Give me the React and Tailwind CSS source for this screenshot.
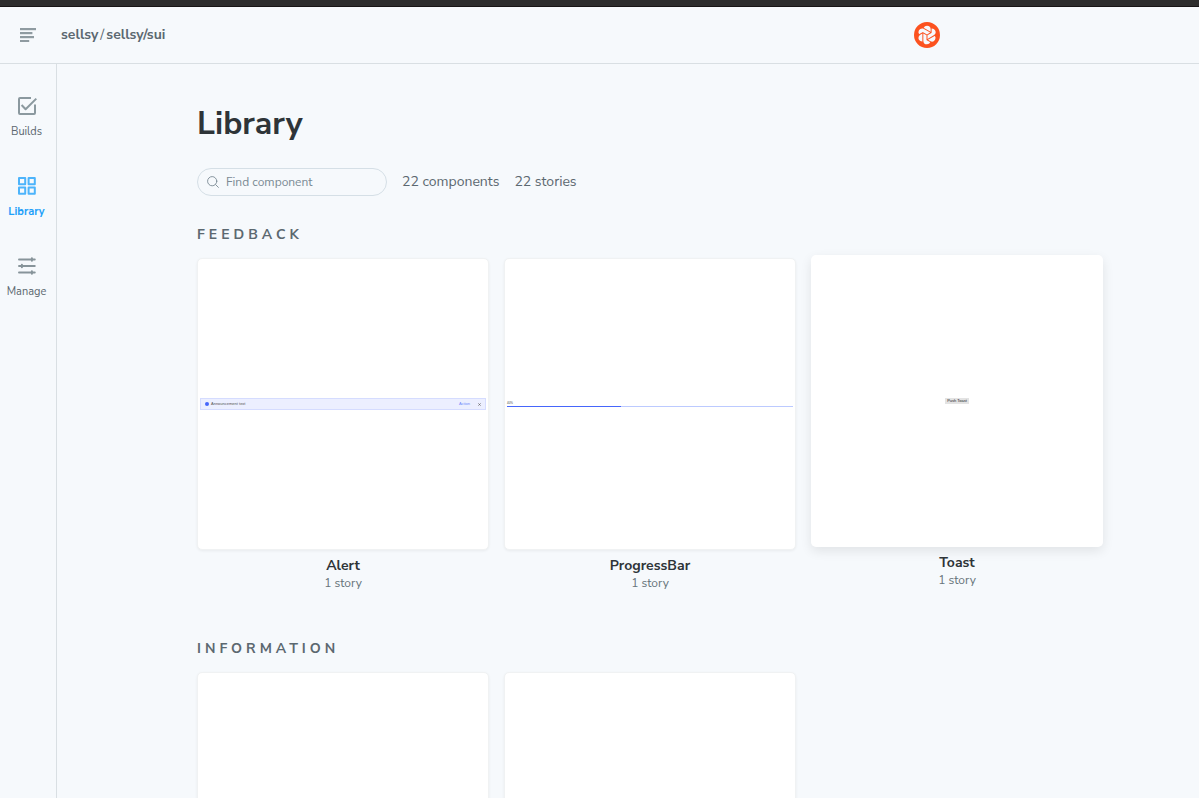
import React from "react";
import { SiChromatic } from "react-icons/si";

function MenuIcon() {
  return (
    <svg width="18" height="16" viewBox="0 0 18 16" fill="#8f9ba1" aria-hidden="true">
      <rect x="1" y="1" width="16" height="2.2" />
      <rect x="1" y="5" width="12.4" height="2.2" />
      <rect x="1" y="9" width="14" height="2.2" />
      <rect x="1" y="13" width="9.2" height="2" />
    </svg>
  );
}

function BuildsIcon() {
  return (
    <svg width="20" height="20" viewBox="0 0 20 20" fill="none" stroke="#8b999f" strokeWidth="2" strokeLinecap="butt" strokeLinejoin="round" aria-hidden="true">
      <path d="M14 2H3a1 1 0 0 0-1 1v14a1 1 0 0 0 1 1h14a1 1 0 0 0 1-1V8.5" />
      <path d="M4.6 9l4 4.2L19.3 2.6" />
    </svg>
  );
}

function LibraryIcon() {
  return (
    <svg width="20" height="20" viewBox="0 0 20 20" fill="none" stroke="#4db4fb" strokeWidth="2" strokeLinejoin="round" aria-hidden="true">
      <rect x="2" y="2" width="6.2" height="6.2" />
      <rect x="11.6" y="2" width="6.2" height="6.2" />
      <rect x="2" y="11.6" width="6.2" height="6.2" />
      <rect x="11.6" y="11.6" width="6.2" height="6.2" />
    </svg>
  );
}

function ManageIcon() {
  return (
    <svg width="20" height="20" viewBox="0 0 20 20" fill="none" stroke="#87949a" strokeWidth="1.9" strokeLinecap="round" aria-hidden="true">
      <path d="M2 3.5h15.8M2 10h15.8M2 16.5h15.8" />
      <path d="M14.9 2.2v2.6M4.9 8.7v2.6M14.9 15.2v2.6" strokeWidth="2" />
    </svg>
  );
}

function SearchIcon() {
  return (
    <svg width="12" height="12" viewBox="0 0 12 12" fill="none" stroke="#7a8a94" strokeWidth="0.9" strokeLinecap="round" aria-hidden="true">
      <circle cx="5.2" cy="5.2" r="4.6" />
      <path d="M8.6 8.6l2.8 2.8" />
    </svg>
  );
}

const navItems = [
  { label: "Builds", Icon: BuildsIcon },
  { label: "Library", Icon: LibraryIcon, active: true },
  { label: "Manage", Icon: ManageIcon },
];

function AlertPreview() {
  return (
    <div className="mx-0.5 flex h-3 w-full items-center border border-[#d5dcff] bg-[#ecefff] px-1 font-['Liberation_Sans',sans-serif] text-[4px] leading-none text-[#555]">
      <span className="mr-0.5 size-1 rounded-full bg-[#4666fb]" />
      <span>Announcement text</span>
      <span className="ml-auto text-[#7088fb]">Action</span>
      <svg className="ml-2 size-[3px]" viewBox="0 0 4 4" stroke="#666" strokeWidth="1" aria-hidden="true">
        <path d="M0.5 0.5l3 3M3.5 0.5l-3 3" />
      </svg>
    </div>
  );
}

function ProgressPreview() {
  return (
    <div className="mx-0.5 flex w-full flex-col font-['Liberation_Sans',sans-serif] text-[3px] leading-[3px] text-[#444]">
      <span>40%</span>
      <div className="mt-px flex h-px bg-[#bccaff]">
        <span className="w-2/5 bg-[#4666fb]" />
      </div>
    </div>
  );
}

function ToastPreview() {
  return (
    <span className="bg-[#e3e3e3] px-0.5 py-px font-['Liberation_Sans',sans-serif] text-[4px] leading-[4px] text-[#222]">
      Push Toast
    </span>
  );
}

const sections = [
  {
    title: "FEEDBACK",
    items: [
      { name: "Alert", Preview: AlertPreview },
      { name: "ProgressBar", Preview: ProgressPreview },
      { name: "Toast", Preview: ToastPreview, raised: true },
    ],
  },
  { title: "INFORMATION", items: [{ name: "" }, { name: "" }] },
];

function ComponentCard({ name, Preview, raised }) {
  return (
    <li>
      <a href="#component" className={raised ? "block -translate-y-[3px]" : "block"}>
        <div
          className={
            raised
              ? "flex aspect-square items-center justify-center rounded-[5px] bg-white shadow-[0_4px_12px_rgba(0,0,0,0.09)]"
              : "flex aspect-square items-center justify-center rounded-[5px] border border-[#f0f2f3] bg-white shadow-[0_1px_3px_rgba(0,0,0,0.06)]"
          }
        >
          {Preview && <Preview />}
        </div>
        {name && (
          <div className="pt-1.5 text-center">
            <h3 className="text-sm leading-5 font-bold text-[#2e3438]">{name}</h3>
            <p className="text-xs leading-[14px] text-[#66737a]">1 story</p>
          </div>
        )}
      </a>
    </li>
  );
}

export default function App() {
  return (
    <div className="flex h-screen flex-col bg-[#f6f9fc] font-['Nunito_Sans','Nunito','Open_Sans',sans-serif] text-[#5c6870]">
      <div className="h-[7px] shrink-0 border-b border-[#171415] bg-[#2d2d2d]" />
      <header className="flex h-[57px] shrink-0 items-center border-b border-[#d9dfe3] pr-[259px] pl-[19px]">
        <button type="button" aria-label="Toggle menu">
          <MenuIcon />
        </button>
        <nav aria-label="Breadcrumb" className="ml-6 flex gap-0.5 text-sm leading-5 font-bold">
          <a href="#account">sellsy</a>
          <span className="font-normal">/</span>
          <a href="#project">sellsy/sui</a>
        </nav>
        <button type="button" aria-label="Account" className="ml-auto rounded-full">
          <SiChromatic size={26} color="#fc521f" />
        </button>
      </header>
      <div className="flex min-h-0 flex-1">
        <nav aria-label="Main" className="flex w-[57px] shrink-0 flex-col gap-9 border-r border-[#d9dfe3] pt-8 pr-[3px]">
          {navItems.map(({ label, Icon, active }) => (
            <a
              key={label}
              href={"#" + label.toLowerCase()}
              className={
                active
                  ? "flex h-11 flex-col items-center gap-2 text-[11px] leading-4 font-bold text-[#1ea0f9]"
                  : "flex h-11 flex-col items-center gap-2 text-[11px] leading-4"
              }
            >
              <Icon />
              {label}
            </a>
          ))}
        </nav>
        <main className="min-w-0 flex-1 overflow-y-auto pt-10 pr-24 pl-[140px] [scrollbar-width:none]">
          <h1 className="text-[32px] leading-10 font-bold text-[#2e3438]">Library</h1>
          <div className="mt-6 flex items-center gap-[15px] text-sm leading-5">
            <label className="flex h-7 w-[190px] items-center gap-[7px] rounded-full border border-[#d5dfe6] px-[9px]">
              <SearchIcon />
              <input
                type="search"
                aria-label="Find component"
                placeholder="Find component"
                className="min-w-0 flex-1 bg-transparent text-xs outline-none placeholder:text-[#7a8a94]"
              />
            </label>
            <span>22 components</span>
            <span>22 stories</span>
          </div>
          {sections.map(({ title, items }) => (
            <section key={title} className="mb-5 pt-[29px]">
              <h2 className="text-sm leading-5 font-bold tracking-[4px]">{title}</h2>
              <ul className="mt-[13px] grid grid-cols-3 gap-[15px]">
                {items.map((item, i) => (
                  <ComponentCard key={i} {...item} />
                ))}
              </ul>
            </section>
          ))}
        </main>
      </div>
    </div>
  );
}
